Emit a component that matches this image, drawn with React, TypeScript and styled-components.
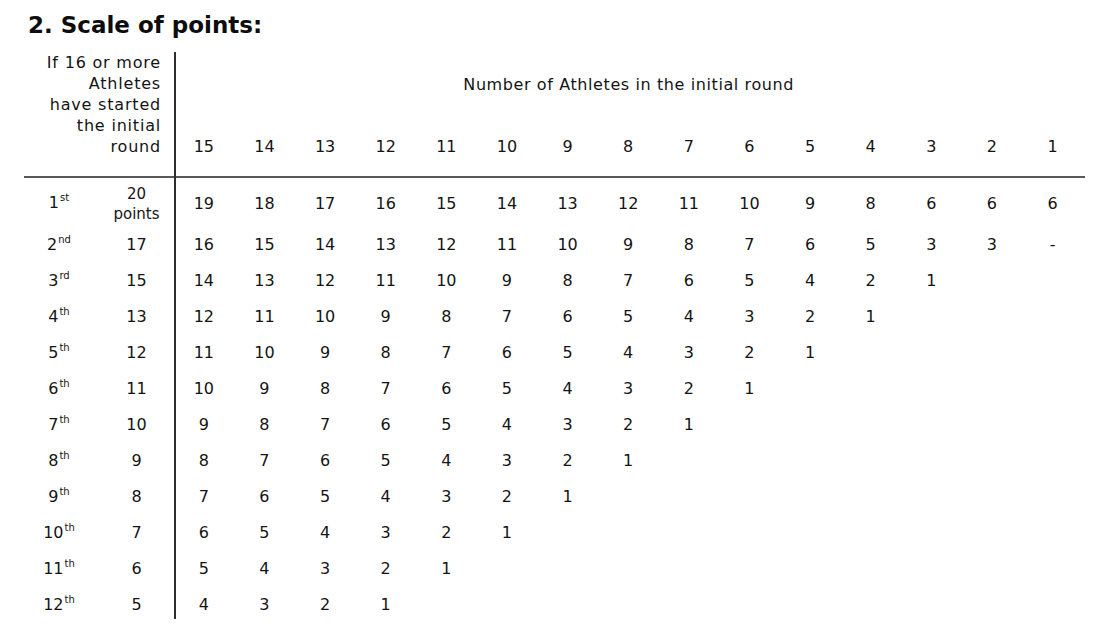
import styled, { createGlobalStyle } from "styled-components";

const GlobalStyle = createGlobalStyle`
	html, body {
		margin: 0;
		padding: 0;
		background: #ffffff;
	}
	body {
		font-family: "DejaVu Sans", Verdana, sans-serif;
		color: #141414;
	}
`;

const columns = [15, 14, 13, 12, 11, 10, 9, 8, 7, 6, 5, 4, 3, 2, 1];

type RowData = {
	rank: number;
	suffix: string;
	points: number;
	values: (number | string)[];
};

const countdown = (from: number) =>
	Array.from({ length: from }, (_, i) => from - i);

const rows: RowData[] = [
	{
		rank: 1,
		suffix: "st",
		points: 20,
		values: [19, 18, 17, 16, 15, 14, 13, 12, 11, 10, 9, 8, 6, 6, 6],
	},
	{
		rank: 2,
		suffix: "nd",
		points: 17,
		values: [16, 15, 14, 13, 12, 11, 10, 9, 8, 7, 6, 5, 3, 3, "-"],
	},
	{
		rank: 3,
		suffix: "rd",
		points: 15,
		values: [14, 13, 12, 11, 10, 9, 8, 7, 6, 5, 4, 2, 1],
	},
	...[13, 12, 11, 10, 9, 8, 7, 6, 5].map((points, i) => ({
		rank: i + 4,
		suffix: "th",
		points,
		values: countdown(points - 1),
	})),
];

export default function App() {
	return (
		<>
			<GlobalStyle />
			<Page>
				<Title>2. Scale of points:</Title>
				<Table>
					<HeaderNote>
						If 16 or more
						<br />
						Athletes
						<br />
						have started
						<br />
						the initial
						<br />
						round
					</HeaderNote>
					<Caption>Number of Athletes in the initial round</Caption>
					{columns.map((n) => (
						<HeadNumber key={`h-${n}`}>{n}</HeadNumber>
					))}
					<Rule />
					<Divider />
					{rows.map((row) => (
						<Row key={row.rank} row={row} />
					))}
				</Table>
			</Page>
		</>
	);
}

const Row = ({ row }: { row: RowData }) => {
	const cells = columns.map((_, i) => row.values[i] ?? "");
	const first = row.rank === 1;
	return (
		<>
			<RankCell>
				<span>
					{row.rank}
					<Sup>{row.suffix}</Sup>
				</span>
			</RankCell>
			<PointsCell $stacked={first}>
				{first ? (
					<>
						{row.points}
						<br />
						points
					</>
				) : (
					row.points
				)}
			</PointsCell>
			{cells.map((v, i) => (
				<NumberCell key={i} $first={first}>
					{v}
				</NumberCell>
			))}
		</>
	);
};

const Page = styled.div`
	width: 1102px;
	height: 638px;
	box-sizing: border-box;
	padding: 11px 0 0 24px;
`;

const Title = styled.h2`
	margin: 0 0 13px 4px;
	font-size: 23px;
	line-height: 28px;
	font-weight: bold;
	color: #0d0d0d;
`;

const Table = styled.div`
	display: grid;
	grid-template-columns: 66px 84px 2px repeat(15, 60.64px);
	grid-template-rows: auto auto 2px 48px repeat(11, 36px);
	font-size: 16px;
	line-height: 21px;
`;

const HeaderNote = styled.div`
	grid-column: 1 / 3;
	grid-row: 1 / 3;
	text-align: right;
	letter-spacing: 0.8px;
	padding: 0 13px 19px 0;
`;

const Caption = styled.div`
	grid-column: 4 / -1;
	grid-row: 1;
	text-align: center;
	letter-spacing: 0.6px;
	padding: 22px 4px 41px 0;
`;

const HeadNumber = styled.div`
	grid-row: 2;
	text-align: center;
	padding-right: 5px;
	padding-bottom: 19px;
`;

const Rule = styled.div`
	grid-column: 1 / -1;
	grid-row: 3;
	background: #5a5a5a;
`;

const Divider = styled.div`
	grid-column: 3;
	grid-row: 1 / -1;
	background: #2e2e2e;
	margin-bottom: 3px;
`;

const RankCell = styled.div`
	display: flex;
	align-items: center;
	justify-content: center;
	padding-left: 4px;
	padding-top: 1px;
`;

const Sup = styled.sup`
	font-size: 10px;
	line-height: 0;
	vertical-align: 7px;
	margin-left: 1px;
`;

const PointsCell = styled.div<{ $stacked: boolean }>`
	display: flex;
	align-items: center;
	justify-content: center;
	text-align: center;
	padding-left: 9px;
	font-size: ${(p) => (p.$stacked ? "15px" : "16px")};
	line-height: ${(p) => (p.$stacked ? "20px" : "21px")};
	padding-top: ${(p) => (p.$stacked ? "3px" : "1px")};
`;

const NumberCell = styled.div<{ $first: boolean }>`
	display: flex;
	align-items: center;
	justify-content: center;
	padding-right: 5px;
	padding-top: ${(p) => (p.$first ? "2px" : "0")};
`;
